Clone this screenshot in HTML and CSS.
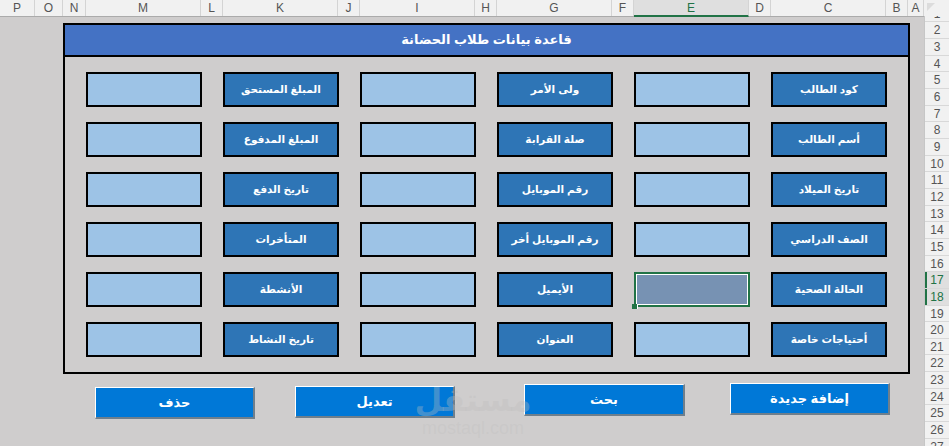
FILE: index.html
```html
<!DOCTYPE html>
<html lang="ar">
<head>
    <meta charset="UTF-8">
    <meta name="viewport" content="width=device-width, initial-scale=1.0">
    <title>قاعدة بيانات طلاب الحضانة</title>
    <link rel="stylesheet" href="styles.css">
</head>
<body>

<div class="col-header">
    <span class="col w35">P</span>
    <span class="col w28">O</span>
    <span class="col w23">N</span>
    <span class="col w115">M</span>
    <span class="col w22">L</span>
    <span class="col w115">K</span>
    <span class="col w22">J</span>
    <span class="col w115">I</span>
    <span class="col w22">H</span>
    <span class="col w115">G</span>
    <span class="col w22">F</span>
    <span class="col w115 col-active">E</span>
    <span class="col w22">D</span>
    <span class="col w115">C</span>
    <span class="col w22">B</span>
    <span class="col w16">A</span>
    <span class="corner"></span>
</div>

<div class="main">
    <div class="sheet">
        <div class="panel">
            <div class="panel-title" dir="rtl">قاعدة بيانات طلاب الحضانة</div>
            <div class="form-grid" dir="rtl">
                <div class="label">كود الطالب</div><div class="field"></div>
                <div class="label">ولى الأمر</div><div class="field"></div>
                <div class="label">المبلغ المستحق</div><div class="field"></div>

                <div class="label">أسم الطالب</div><div class="field"></div>
                <div class="label">صلة القرابة</div><div class="field"></div>
                <div class="label">المبلغ المدفوع</div><div class="field"></div>

                <div class="label">تاريخ الميلاد</div><div class="field"></div>
                <div class="label">رقم الموبايل</div><div class="field"></div>
                <div class="label">تاريخ الدفع</div><div class="field"></div>

                <div class="label">الصف الدراسي</div><div class="field"></div>
                <div class="label">رقم الموبايل أخر</div><div class="field"></div>
                <div class="label">المتأخرات</div><div class="field"></div>

                <div class="label">الحالة الصحية</div><div class="field field-selected"><span class="handle"></span></div>
                <div class="label">الأيميل</div><div class="field"></div>
                <div class="label">الأنشطة</div><div class="field"></div>

                <div class="label">أحتياجات خاصة</div><div class="field"></div>
                <div class="label">العنوان</div><div class="field"></div>
                <div class="label">تاريخ النشاط</div><div class="field"></div>
            </div>
        </div>

        <div class="actions" dir="ltr">
            <button class="btn btn-delete">حذف</button>
            <button class="btn btn-edit">تعديل</button>
            <button class="btn btn-search">بحث</button>
            <button class="btn btn-add">إضافة جديدة</button>
        </div>

        <div class="watermark">
            <div class="wm-ar" dir="rtl">مستقل</div>
            <div class="wm-en">mostaql.com</div>
        </div>
    </div>

    <div class="row-gutter">
        <div class="row row-first">1</div>
        <div class="row">2</div>
        <div class="row">3</div>
        <div class="row">4</div>
        <div class="row">5</div>
        <div class="row">6</div>
        <div class="row">7</div>
        <div class="row">8</div>
        <div class="row">9</div>
        <div class="row">10</div>
        <div class="row">11</div>
        <div class="row">12</div>
        <div class="row">13</div>
        <div class="row">14</div>
        <div class="row">15</div>
        <div class="row">16</div>
        <div class="row row-active">17</div>
        <div class="row row-active">18</div>
        <div class="row">19</div>
        <div class="row">20</div>
        <div class="row">21</div>
        <div class="row">22</div>
        <div class="row">23</div>
        <div class="row">24</div>
        <div class="row">25</div>
        <div class="row">26</div>
        <div class="row">27</div>
    </div>
</div>

</body>
</html>
```

FILE: styles.css
```css
html, body { margin: 0; height: 100%; overflow: hidden; }
body { background: #cfcdcd; font-family: "Liberation Sans", "DejaVu Sans", sans-serif; }

/* excel column letters */
.col-header { display: flex; height: 16px; background: #f1f1f1; border-bottom: 1px solid #ababab; }
.col { flex: none; height: 16px; line-height: 17px; text-align: center; font-size: 12px; color: #555; border-right: 1px solid #d4d4d4; box-sizing: border-box; }
.w16 { width: 16px; }
.w22 { width: 22px; }
.w23 { width: 23px; }
.w28 { width: 28px; }
.w35 { width: 35px; }
.w115 { width: 115px; }
.col-active { background: #dfdfdf; color: #217346; border-bottom: 2px solid #217346; height: 17px; }
.corner { flex: 1; position: relative; }
.corner::after { content: ""; position: absolute; left: 3px; top: 3px; border-style: solid; border-width: 0 0 8px 8px; border-color: transparent transparent transparent #dcdcdc; }

.main { display: flex; height: 429px; }
.sheet { flex: 1; position: relative; padding: 6px 0 0 63px; }

/* the form */
.panel { width: 847px; height: 351px; box-sizing: border-box; border: 2px solid #000; }
.panel-title { height: 30px; line-height: 29px; text-align: center; background: #4472c4; border-bottom: 2px solid #000; color: #fff; font-size: 13px; font-weight: bold; }
.form-grid { display: grid; grid-template-columns: repeat(6, 116px); grid-auto-rows: 35px; column-gap: 21px; row-gap: 15px; padding: 15px 21px; }
.label { box-sizing: border-box; border: 2px solid #000; background: #2e75b6; color: #fff; font-size: 10.5px; font-weight: bold; text-align: center; line-height: 30px; }
.field { box-sizing: border-box; border: 2px solid #000; background: #9dc3e6; position: relative; }
.field-selected { background: #7792b3; border-color: #217346; box-shadow: inset 0 0 0 1px #fff; }
.handle { position: absolute; left: -4px; bottom: -4px; width: 5px; height: 5px; background: #217346; border: 1px solid #fff; border-width: 0 1px 0 0; }

/* macro buttons */
.actions { display: flex; align-items: flex-start; padding-left: 32px; }
.btn { flex: none; width: 160px; height: 32px; padding: 0; font-family: inherit; font-size: 13px; font-weight: bold; color: #fff; background: #0078d7; border-style: solid; border-width: 1px 2px 2px 1px; border-color: #fff #6f7f8c #6f7f8c #fff; }
.btn-delete { margin-top: 13px; }
.btn-edit { margin-top: 12px; margin-left: 40px; }
.btn-search { margin-top: 10px; margin-left: 69px; width: 161px; }
.btn-add { margin-top: 9px; margin-left: 45px; }

.watermark { position: absolute; left: 414px; top: 362px; width: 118px; text-align: center; pointer-events: none; }
.wm-ar { font-size: 32px; line-height: 42px; font-weight: bold; color: rgba(190, 190, 190, 0.35); }
.wm-en { font-size: 18px; line-height: 15px; color: rgba(190, 190, 190, 0.3); white-space: nowrap; }

/* excel row numbers, mirrored to the right side */
.row-gutter { flex: none; width: 25px; margin-top: -1px; overflow: hidden; background: #f1f1f1; border-left: 1px solid #c6c6c6; box-sizing: border-box; }
.row { box-sizing: border-box; height: 16.67px; line-height: 16px; font-size: 12px; color: #555; text-align: center; border-bottom: 1px solid #d8d8d8; }
.row-first { margin-top: -10.3px; }
.row-active { background: #dfdfdf; color: #217346; box-shadow: inset 2px 0 0 #217346; }
```
